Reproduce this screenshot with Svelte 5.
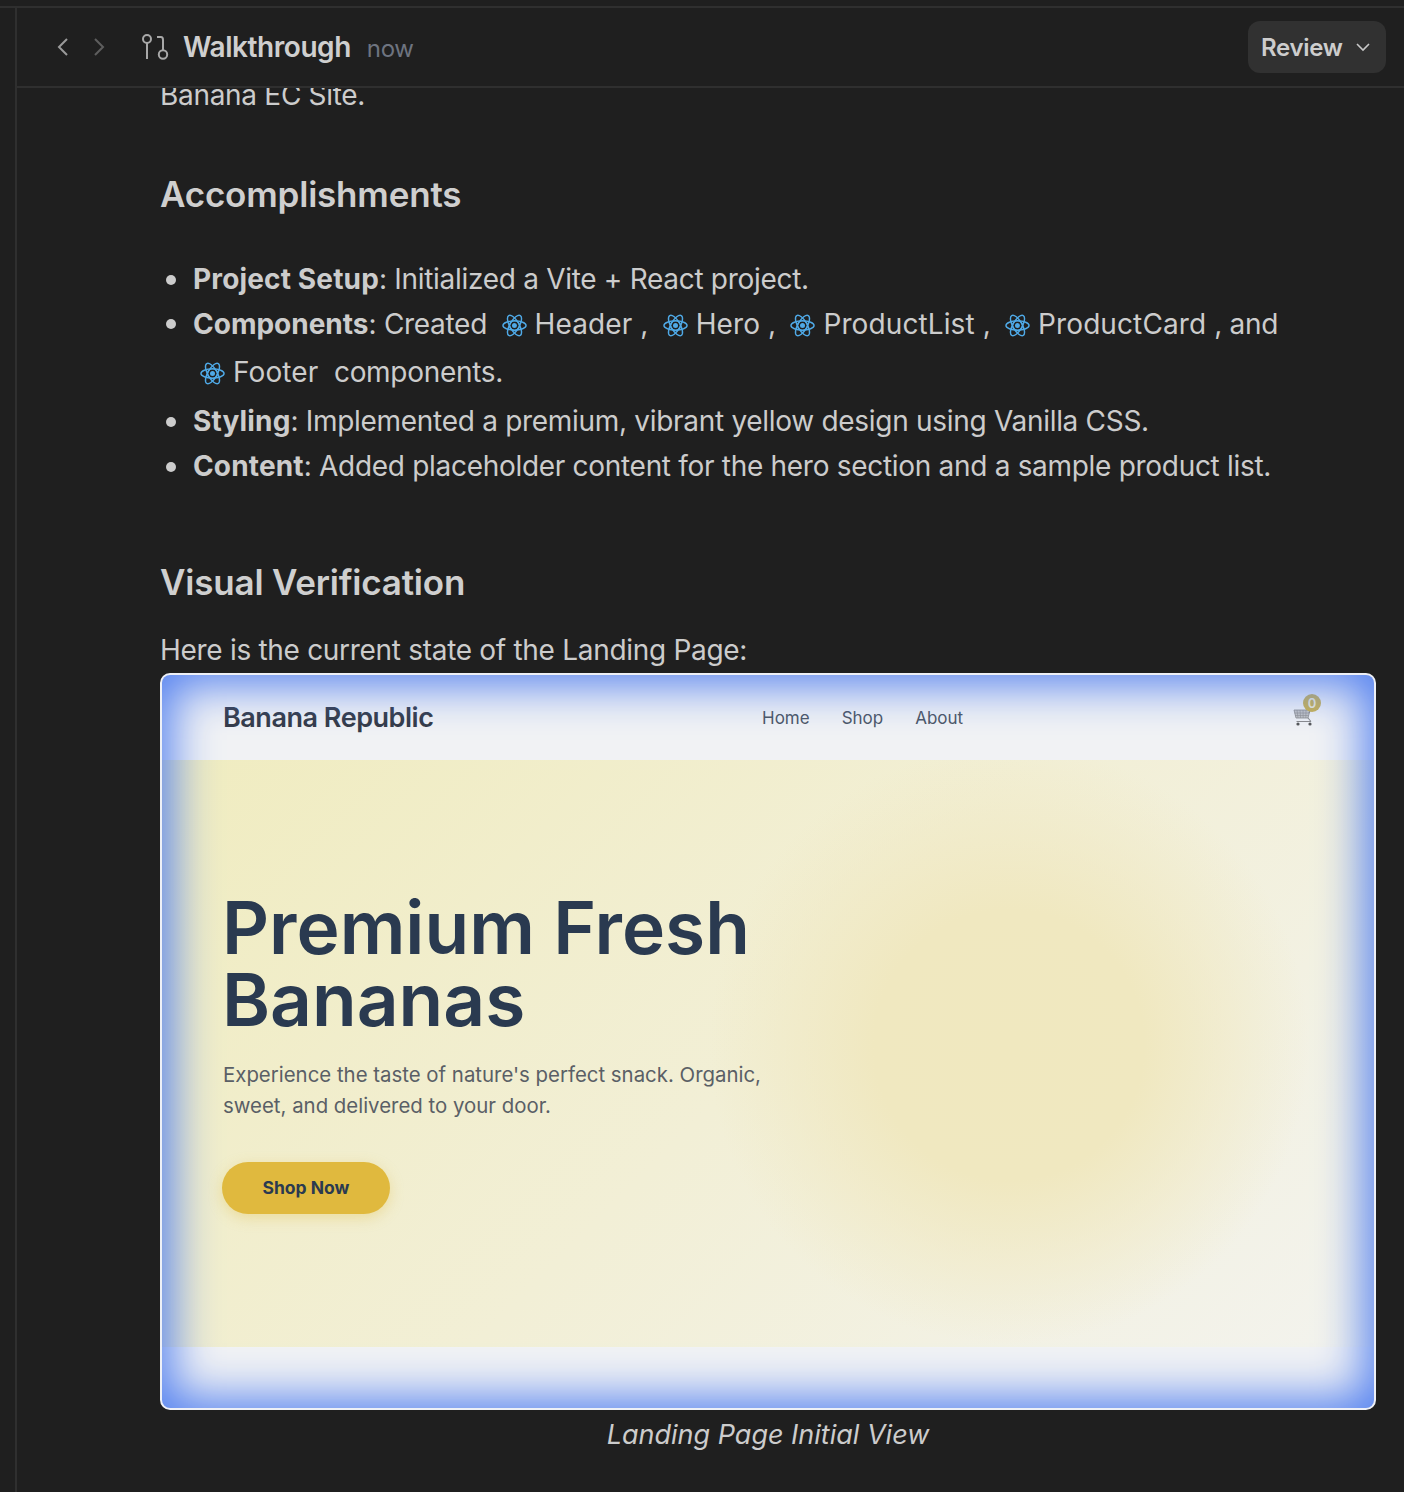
<script>
  const nav = ['Home', 'Shop', 'About'];
</script>

{#snippet atom()}
  <svg class="atom" viewBox="0 0 26 26" fill="none" stroke="#4fa9e6" stroke-width="1.5">
    <circle cx="13" cy="13" r="2.6" fill="#4fa9e6" stroke="none" />
    <circle cx="13" cy="13" r="5.2" stroke-width="1.3" />
    <ellipse cx="13" cy="13" rx="12" ry="4.8" />
    <ellipse cx="13" cy="13" rx="12" ry="4.8" transform="rotate(60 13 13)" />
    <ellipse cx="13" cy="13" rx="12" ry="4.8" transform="rotate(120 13 13)" />
  </svg>
{/snippet}

{#snippet chip(name)}
  <span class="chip">{@render atom()}<span>{name}</span></span>
{/snippet}

<div class="window">
  <aside class="rail"></aside>
  <main class="pane">
    <header class="bar">
      <div class="arrows">
        <svg width="14" height="20" viewBox="0 0 14 20" fill="none" stroke="#9a9a9a" stroke-width="2"><path d="M11 2 L3 10 L11 18" /></svg>
        <svg width="14" height="20" viewBox="0 0 14 20" fill="none" stroke="#5e5e5e" stroke-width="2"><path d="M3 2 L11 10 L3 18" /></svg>
      </div>
      <svg class="git" width="28" height="28" viewBox="0 0 28 28" fill="none" stroke="#a8a8a8" stroke-width="2">
        <circle cx="6" cy="6" r="4" />
        <path d="M6 10 V26" />
        <path d="M16 4 H20 Q22 4 22 7 V17" />
        <circle cx="22" cy="21.5" r="4.2" />
      </svg>
      <span class="title">Walkthrough</span>
      <span class="time">now</span>
      <button class="review">Review
        <svg width="14" height="10" viewBox="0 0 14 10" fill="none" stroke="#c8c8c8" stroke-width="1.6"><path d="M1 2 L7 8 L13 2" /></svg>
      </button>
    </header>
    <div class="scroll">
      <article class="doc">
        <p class="lead">Banana EC Site.</p>
        <h2 class="first">Accomplishments</h2>
        <ul>
          <li><b>Project Setup</b>: Initialized a Vite + React project.</li>
          <li class="chips"><b>Components</b>: Created {@render chip('Header')}<span class="comma">,</span> {@render chip('Hero')}<span class="comma">,</span> {@render chip('ProductList')}<span class="comma">,</span> {@render chip('ProductCard')}<span class="comma">,</span> and {@render chip('Footer')} <span class="after">components.</span></li>
          <li><b>Styling</b>: Implemented a premium, vibrant yellow design using Vanilla CSS.</li>
          <li><b>Content</b>: Added placeholder content for the hero section and a sample product list.</li>
        </ul>
        <h2 class="second">Visual Verification</h2>
        <p class="intro">Here is the current state of the Landing Page:</p>
        <figure>
          <div class="shot">
            <div class="site-nav">
              <span class="logo">Banana Republic</span>
              <nav>{#each nav as n}<span>{n}</span>{/each}</nav>
              <span class="cart">
                <svg class="cart-icon" width="22" height="18" viewBox="0 0 22 18" fill="none">
                  <path d="M1 2 H17 L15 10 H3 Z" fill="#c4c4c4" stroke="#8c8c8c" stroke-width=".8" />
                  <path d="M4 2 L5 10 M7 2 L7.6 10 M10 2 L10.2 10 M13 2 L12.8 10 M1.5 5 H16 M2 7.5 H15.5" stroke="#8f8f8f" stroke-width=".6" />
                  <path d="M3.5 13.5 H18 M15 10 L18 13.5 M16 5 L18 1" stroke="#8a8a8a" stroke-width="1.1" />
                  <circle cx="5" cy="16" r="1.6" fill="#555" />
                  <circle cx="17" cy="16" r="1.6" fill="#555" />
                </svg>
                <span class="badge">0</span>
              </span>
            </div>
            <section class="hero">
              <h1>Premium Fresh Bananas</h1>
              <p>Experience the taste of nature's perfect snack. Organic, sweet, and delivered to your door.</p>
              <span class="cta">Shop Now</span>
            </section>
            <div class="site-foot"></div>
            <div class="glow"></div>
          </div>
          <figcaption>Landing Page Initial View</figcaption>
        </figure>
      </article>
    </div>
  </main>
</div>

<style>
  :global(body) { margin: 0; background: #1f1f1f; }
  .window { position: relative; display: flex; width: 1404px; height: 1492px; box-sizing: border-box; padding-top: 6px; background: #1f1f1f; overflow: hidden; font-family: Inter, "Liberation Sans", sans-serif; color: #cccccc; }
  .window::before { content: ""; position: absolute; left: 0; right: 0; top: 6px; height: 2px; background: #2f2f2f; }
  .rail { width: 15px; flex: none; border-right: 2px solid #2f2f2f; }
  .pane { flex: 1; min-width: 0; display: flex; flex-direction: column; }
  .bar { position: relative; z-index: 2; height: 80px; flex: none; margin-top: 2px; box-sizing: border-box; border-bottom: 2px solid #2f2f2f; background: #1f1f1f; display: flex; align-items: center; padding: 0 18px 0 39px; }
  .arrows { display: flex; gap: 22px; width: 85px; }
  .git { margin-right: 14px; }
  .title { font-size: 28px; font-weight: 600; color: #cfcfcf; letter-spacing: -0.45px; }
  .time { margin-left: 16px; font-size: 24px; color: #6e7480; margin-top: 2px; letter-spacing: -0.4px; }
  .review { margin-left: auto; width: 138px; height: 52px; display: flex; align-items: center; gap: 13px; padding: 0 0 0 13px; box-sizing: border-box; background: #313131; color: #cdcdcd; border: 0; border-radius: 12px; font: 600 24px Inter, sans-serif; letter-spacing: -0.3px; }
  .scroll { flex: 1; overflow: hidden; }
  .doc { margin-top: -15px; padding: 0 28px 0 143px; font-size: 28px; line-height: 45px; letter-spacing: -0.3px; }
  .doc p { margin: 0; }
  h2 { margin: 0; font-size: 35px; line-height: 48px; font-weight: 600; color: #cfcfcf; letter-spacing: -0.2px; }
  .first { margin-top: 52px; }
  .second { margin-top: 69px; }
  ul { margin: 39px 0 0; padding: 0 0 0 33px; list-style: none; }
  li { position: relative; }
  li::before { content: ""; position: absolute; left: -27px; top: 18px; width: 10px; height: 10px; border-radius: 50%; background: #cccccc; }
  li.chips { line-height: 48px; margin: -2px 0 3px; }
  li.chips::before { top: 19px; }
  b { font-weight: 700; letter-spacing: 0.15px; }
  li.chips b { letter-spacing: 0; }
  .chip { margin-left: 7px; white-space: nowrap; letter-spacing: 0.1px; }
  .atom { width: 25px; height: 25px; margin-right: 8px; vertical-align: -4px; }
  .comma { margin-left: 8px; }
  .after { margin-left: 8px; }
  .intro { margin-top: 22px !important; }
  figure { margin: 0; }
  .shot { position: relative; height: 737px; box-sizing: border-box; border: 2px solid #eef0f6; border-radius: 10px; overflow: hidden; display: flex; flex-direction: column; background: #f1f2f4; }
  .site-nav { height: 85px; flex: none; display: flex; align-items: center; padding: 0 60px 0 61px; position: relative; letter-spacing: 0; }
  .logo { font-size: 27px; font-weight: 600; letter-spacing: -0.47px; width: 539px; color: #343a46; }
  nav { display: flex; gap: 32px; font-size: 17px; line-height: 24px; color: #4c5563; }
  .cart { position: absolute; left: 1131px; top: 33px; width: 22px; height: 22px; }
  .cart-icon { display: block; }
  .badge { position: absolute; left: 10px; top: -14px; width: 18px; height: 18px; border-radius: 50%; background: #cbb24e; color: #f0ecd6; font-size: 13px; font-weight: 600; line-height: 18px; text-align: center; }
  .hero { height: 587px; flex: none; box-sizing: border-box; padding: 132px 60px 0; background:
      radial-gradient(circle 300px at 847px 285px, #f0e8bf 0%, #f0e8c0 45%, rgba(240,233,196,0) 100%),
      linear-gradient(135deg, #f0ecc0 0%, #f2efd6 50%, #f3f3ee 100%); }
  h1 { margin: 0; width: 600px; font-size: 73px; line-height: 72px; font-weight: 600; color: #2a3a50; letter-spacing: 0; }
  .hero p { margin: 23px 0 0 1px !important; width: 560px; font-size: 20.4px; line-height: 31px; color: #5a5f66; letter-spacing: 0; }
  .cta { display: flex; align-items: center; justify-content: center; width: 168px; height: 52px; margin-top: 41px; border-radius: 26px; background: #e0b93e; color: #2a3a50; font-size: 17.5px; font-weight: 700; line-height: 24px; letter-spacing: 0; box-shadow: 0 4px 14px rgba(224,185,62,.35); }
  .site-foot { flex: 1; }
  .glow { position: absolute; inset: 0; box-shadow: inset 0 0 46px 10px #5582f0; pointer-events: none; }
  figcaption { margin-top: 2px; text-align: center; font-size: 27px; font-style: italic; color: #cccccc; letter-spacing: 0; }
</style>
